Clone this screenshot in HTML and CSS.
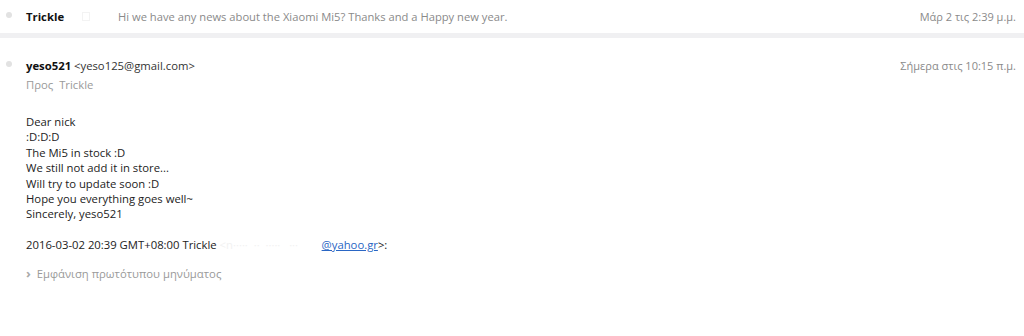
FILE: index.html
```html
<!DOCTYPE html>
<html>
<head>
<meta charset="utf-8">
<link rel="stylesheet" href="styles.css">
</head>
<body>
<div class="row collapsed">
  <span class="dot"></span>
  <span class="sender">Trickle</span>
  <span class="faint-icon"></span>
  <span class="preview">Hi we have any news about the Xiaomi Mi5? Thanks and a Happy new year.</span>
  <span class="date">Μάρ 2 τις 2:39 μ.μ.</span>
</div>
<div class="band"></div>
<div class="message">
  <div class="head">
    <span class="dot"></span>
    <span class="from"><b>yeso521</b> &lt;yeso125@gmail.com&gt;</span>
    <span class="date">Σήμερα στις 10:15 π.μ.</span>
  </div>
  <div class="to">Προς&nbsp; Trickle</div>
  <div class="body">
    <div>Dear nick</div>
    <div>:D:D:D</div>
    <div>The Mi5 in stock :D</div>
    <div>We still not add it in store...</div>
    <div>Will try to update soon :D</div>
    <div>Hope you everything goes well~</div>
    <div>Sincerely, yeso521</div>
  </div>
  <div class="quote">2016-03-02 20:39 GMT+08:00 Trickle <span class="redacted">&lt;n·····&nbsp;&nbsp;··&nbsp;&nbsp;·····&nbsp;&nbsp;&nbsp;···</span><a class="link">@yahoo.gr</a>&gt;:</div>
  <div class="show"><span class="chev">›</span> Εμφάνιση πρωτότυπου μηνύματος</div>
</div>
</body>
</html>
```
FILE: styles.css
```css
html, body { margin: 0; padding: 0; background: #fff; }
body { font-family: "Open Sans", "Noto Sans", sans-serif; font-size: 11.3px; color: #222; width: 1024px; height: 336px; overflow: hidden; }
.row { display: flex; align-items: center; height: 33px; padding: 0 8px 0 6px; }
.dot { width: 6px; height: 6px; border-radius: 50%; background: #e2e2e2; display: inline-block; flex: none; }
.row .dot { margin-top: -3px; }
.head .dot { margin-top: -2px; }
.sender { font-weight: 700; margin-left: 14px; width: 56px; color: #111; }
.faint-icon { width: 6px; height: 7px; border: 1px solid #f3f3f3; margin-right: 28px; }
.preview { color: #8a8a8a; font-size: 11.2px; flex: 1; }
.date { color: #8a8a8a; margin-left: auto; font-size: 11px; }
.band { height: 5px; background: #f0f0f2; }
.message { padding: 0 8px 0 6px; }
.head { display: flex; align-items: center; margin-top: 19px; height: 16px; }
.from { margin-left: 14px; color: #333; }
.from b { color: #111; }
.to { margin-left: 20px; color: #9a9a9a; margin-top: 4px; }
.body { margin: 22px 0 0 20px; line-height: 15.4px; color: #222; }
.quote { margin: 15px 0 0 20px; color: #222; }
.redacted { color: #f2f2f2; display: inline-block; width: 102px; white-space: nowrap; overflow: hidden; vertical-align: bottom; }
.link { color: #2a66c4; text-decoration: underline; }
.show { margin: 12px 0 0 20px; color: #9a9a9a; }
.chev { font-size: 13px; font-weight: 700; color: #aaa; margin-right: 3px; }
```
